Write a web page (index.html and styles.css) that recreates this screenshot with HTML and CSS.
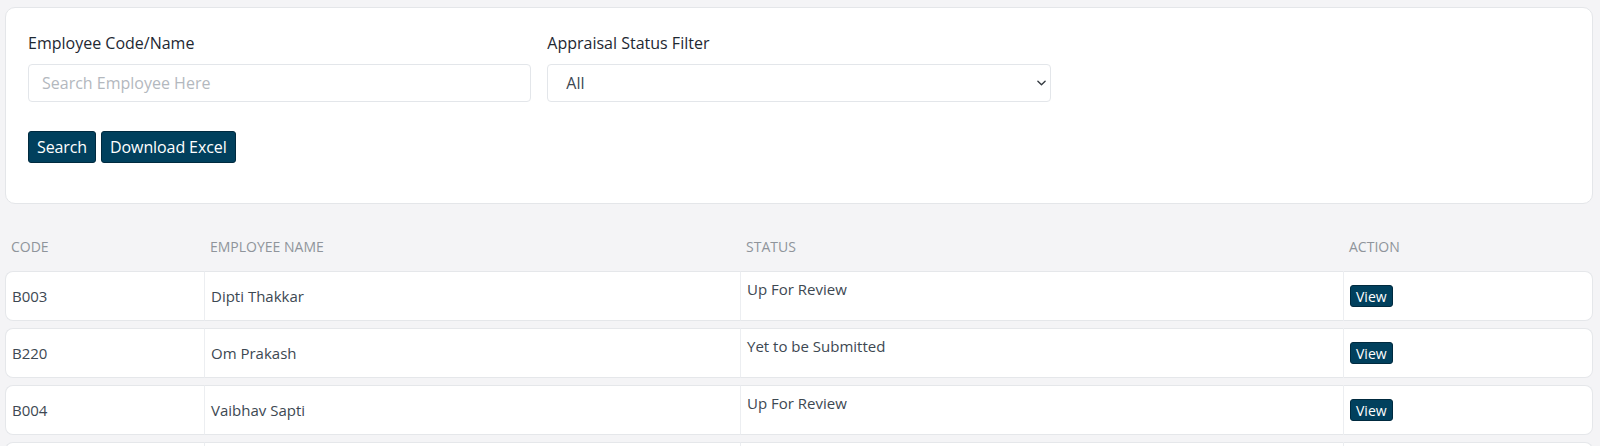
FILE: index.html
```html
<html>
	<head>
		<title>Appraisal - Employees</title>
		<link rel="stylesheet" href="styles.css">
	</head>
	<body>
		<div class="page">
			<div class="filter-card">
				<div class="filter-row">
					<div class="field">
						<label class="field-label" for="empsearch">Employee Code/Name</label>
						<input id="empsearch" class="field-input" type="text" placeholder="Search Employee Here">
					</div>
					<div class="field">
						<label class="field-label" for="statusfilter">Appraisal Status Filter</label>
						<div class="select-wrap">
							<select id="statusfilter" class="field-select">
								<option>All</option>
								<option>Up For Review</option>
								<option>Yet to be Submitted</option>
							</select>
							<svg class="select-arrow" viewBox="0 0 10 6">
								<path d="M1 1l4 4 4-4" fill="none" stroke="#343a40" stroke-width="1.5" stroke-linecap="round" stroke-linejoin="round"/>
							</svg>
						</div>
					</div>
				</div>
				<div class="btn-row">
					<button class="btn">Search</button>
					<button class="btn">Download Excel</button>
				</div>
			</div>

			<table class="emp-table">
				<colgroup>
					<col class="col-code">
					<col class="col-name">
					<col class="col-status">
					<col>
				</colgroup>
				<thead>
					<tr>
						<th>Code</th>
						<th>Employee Name</th>
						<th>Status</th>
						<th>Action</th>
					</tr>
				</thead>
				<tbody>
					<tr>
						<td>B003</td>
						<td>Dipti Thakkar</td>
						<td class="status-cell">Up For Review</td>
						<td><button class="btn btn-sm">View</button></td>
					</tr>
					<tr>
						<td>B220</td>
						<td>Om Prakash</td>
						<td class="status-cell">Yet to be Submitted</td>
						<td><button class="btn btn-sm">View</button></td>
					</tr>
					<tr>
						<td>B004</td>
						<td>Vaibhav Sapti</td>
						<td class="status-cell">Up For Review</td>
						<td><button class="btn btn-sm">View</button></td>
					</tr>
					<tr>
						<td>B005</td>
						<td>Neha Joshi</td>
						<td class="status-cell">Yet to be Submitted</td>
						<td><button class="btn btn-sm">View</button></td>
					</tr>
				</tbody>
			</table>
		</div>
	</body>
</html>
```

FILE: styles.css
```css
body {
  margin: 0;
  background-color: #f4f4f6;
  font-family: "Open Sans", "Noto Sans", sans-serif;
  color: #3d4852;
}

.page {
  padding: 7px 7px 0 5px;
}

.filter-card {
  background-color: #fff;
  border: 1px solid #e4e6e9;
  border-radius: 10px;
  padding: 23px 22px 40px;
}

.filter-row {
  display: grid;
  grid-template-columns: repeat(3, 1fr);
  column-gap: 16px;
}

.field-label {
  display: block;
  font-size: 16px;
  line-height: 24px;
  font-weight: 500;
  color: #1e2832;
  margin-bottom: 9px;
}

.field-input,
.field-select {
  display: block;
  width: 100%;
  height: 38px;
  box-sizing: border-box;
  border: 1px solid #e3e6ea;
  border-radius: 4px;
  background-color: #fff;
  font-family: "Open Sans", "Noto Sans", sans-serif;
  font-size: 16px;
  color: #3d4852;
  outline: none;
}

.field-input {
  padding: 0 13px;
}

.field-input::placeholder {
  color: #b3b8be;
}

.field-select {
  appearance: none;
  -webkit-appearance: none;
  padding: 0 30px 0 18px;
}

.select-wrap {
  position: relative;
}

.select-arrow {
  position: absolute;
  right: 5px;
  top: 16px;
  width: 9px;
  height: 6px;
  pointer-events: none;
}

.btn-row {
  display: flex;
  gap: 5px;
  margin-top: 29px;
}

.btn {
  height: 32px;
  padding: 0 8px;
  font-family: "Open Sans", "Noto Sans", sans-serif;
  font-size: 16px;
  font-weight: 500;
  letter-spacing: -0.1px;
  color: #fff;
  background-color: #01405d;
  border: 1px solid #002a3f;
  border-radius: 3px;
  cursor: pointer;
}

.btn-sm {
  height: 22px;
  padding: 0 5px;
  font-size: 14px;
  font-weight: 500;
  letter-spacing: 0;
  vertical-align: middle;
}

.emp-table {
  width: 100%;
  border-collapse: separate;
  border-spacing: 0 7px;
  table-layout: fixed;
  margin-top: 18px;
}

.col-code {
  width: 199px;
}

.col-name {
  width: 536px;
}

.col-status {
  width: 603px;
}

.emp-table th {
  height: 35px;
  padding: 0 6px;
  text-align: left;
  font-size: 14px;
  font-weight: 400;
  text-transform: uppercase;
  color: #8f949b;
}

.emp-table td {
  height: 50px;
  padding: 0 6px;
  background-color: #fff;
  border-top: 1px solid #e5e7ea;
  border-bottom: 1px solid #e5e7ea;
  font-size: 15px;
  color: #3d4852;
  vertical-align: middle;
}

.emp-table td + td {
  border-left: 1px solid #eceef1;
}

.emp-table td:first-child {
  border-left: 1px solid #e5e7ea;
  border-radius: 8px 0 0 8px;
}

.emp-table td:last-child {
  border-right: 1px solid #e5e7ea;
  border-radius: 0 8px 8px 0;
}

.emp-table td.status-cell {
  vertical-align: top;
  padding-top: 7px;
}
```
